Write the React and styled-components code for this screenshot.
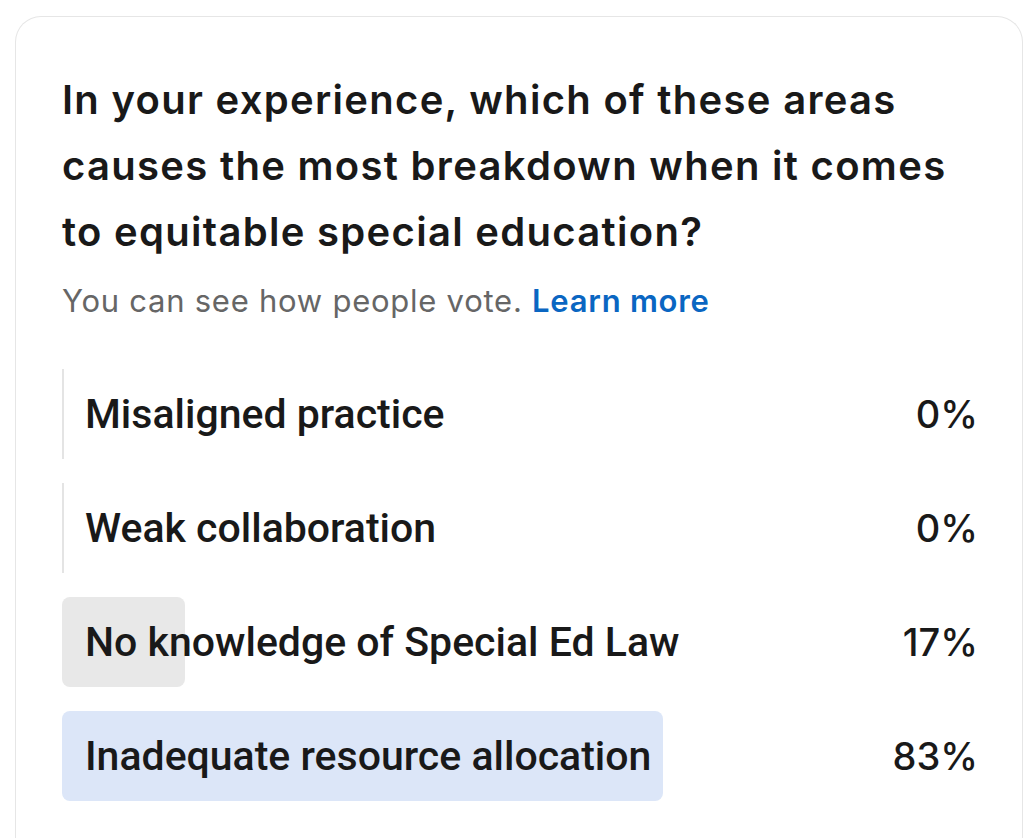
import React from "react";
import styled, { createGlobalStyle } from "styled-components";

const Global = createGlobalStyle`
  html, body { margin: 0; padding: 0; background: #ffffff; }
  body { width: 1030px; height: 838px; overflow: hidden; }
`;

const Page = styled.div`
  padding: 16px 7px 0 15px;
`;

const Card = styled.div`
  border: 1px solid #e6e6e6;
  border-bottom: none;
  border-radius: 26px 26px 0 0;
  padding: 50px 44px 40px 46px;
  min-height: 900px;
  box-sizing: border-box;
`;

const Question = styled.h2`
  margin: 0;
  font-family: Inter, "Liberation Sans", Arial, sans-serif;
  font-weight: 600;
  font-size: 40px;
  line-height: 66px;
  color: #191919;
  letter-spacing: 1.3px;
`;

const Note = styled.p`
  margin: 16px 0 0 0;
  font-family: Inter, "Liberation Sans", Arial, sans-serif;
  font-size: 31px;
  line-height: 40px;
  color: #666666;
  letter-spacing: 0.75px;
`;

const Learn = styled.a`
  color: #0a66c2;
  font-weight: 600;
  text-decoration: none;
`;

const Options = styled.div`
  margin-top: 48px;
  display: flex;
  flex-direction: column;
  gap: 24px;
`;

const Row = styled.div`
  display: flex;
  align-items: center;
  height: 90px;
`;

const Track = styled.div`
  position: relative;
  width: 724px;
  height: 100%;
  display: flex;
  align-items: center;
`;

const Fill = styled.div`
  position: absolute;
  left: 0;
  top: 0;
  bottom: 0;
  min-width: 2px;
  border-radius: ${(p) => (p.$zero ? "0" : "8px")};
  background: ${(p) => (p.$zero ? "#e4e4e4" : p.$top ? "#dce6f8" : "#e8e8e8")};
`;

const Label = styled.span`
  position: relative;
  padding-left: 23px;
  font-family: Roboto, "Liberation Sans", sans-serif;
  font-weight: 500;
  font-size: 41px;
  color: #191919;
  white-space: nowrap;
`;

const Pct = styled.span`
  flex: 1;
  text-align: right;
  font-family: Inter, "Liberation Sans", Arial, sans-serif;
  font-weight: 450;
  font-size: 38px;
  color: #191919;
`;

const options = [
  { label: "Misaligned practice", pct: 0 },
  { label: "Weak collaboration", pct: 0 },
  { label: "No knowledge of Special Ed Law", pct: 17 },
  { label: "Inadequate resource allocation", pct: 83, top: true },
];

export default function App() {
  return (
    <Page>
      <Global />
      <Card>
        <Question>
          In your experience, which of these areas causes the most breakdown when it comes to equitable special education?
        </Question>
        <Note>
          You can see how people vote. <Learn href="#">Learn more</Learn>
        </Note>
        <Options>
          {options.map((o) => (
            <Row key={o.label}>
              <Track>
                <Fill $zero={o.pct === 0} $top={o.top} style={{ width: `${o.pct}%` }} />
                <Label>{o.label}</Label>
              </Track>
              <Pct>{o.pct}%</Pct>
            </Row>
          ))}
        </Options>
      </Card>
    </Page>
  );
}
